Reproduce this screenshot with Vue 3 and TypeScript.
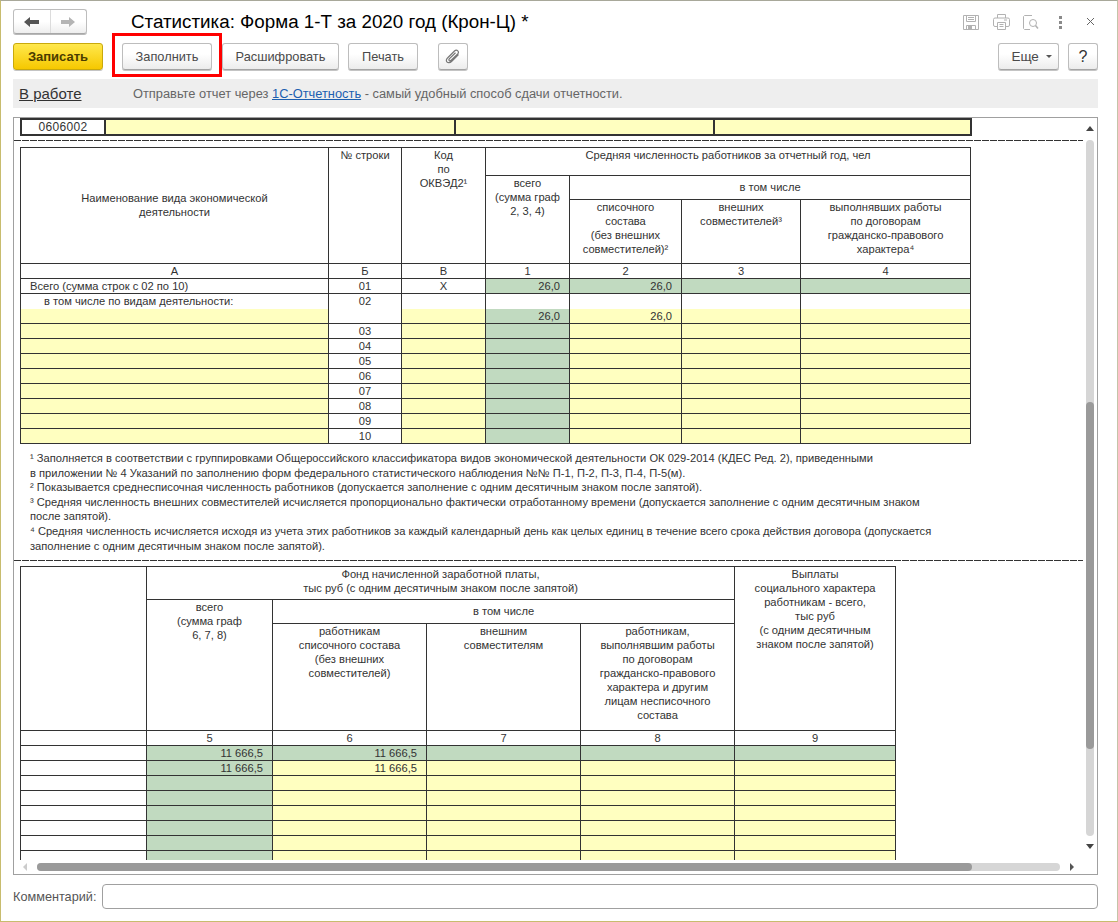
<script setup lang="ts">
const rows1: string[] = ['03', '04', '05', '06', '07', '08', '09', '10']
const rows2: number[] = [1, 2, 3, 4, 5, 6]
const notes: string[] = [
  '¹ Заполняется в соответствии с группировками Общероссийского классификатора видов экономической деятельности ОК 029-2014 (КДЕС Ред. 2), приведенными',
  'в приложении № 4 Указаний по заполнению форм федерального статистического наблюдения №№ П-1, П-2, П-3, П-4, П-5(м).',
  '² Показывается среднесписочная численность работников (допускается заполнение с одним десятичным знаком после запятой).',
  '³ Средняя численность внешних совместителей исчисляется пропорционально фактически отработанному времени (допускается заполнение с одним десятичным знаком',
  'после запятой).',
  '⁴ Средняя численность исчисляется исходя из учета этих работников за каждый календарный день как целых единиц в течение всего срока действия договора (допускается',
  'заполнение с одним десятичным знаком после запятой).'
]
</script>

<template>
  <div class="win">
    <header class="head">
      <div class="nav">
        <button class="nav-btn">
          <svg width="16" height="12" viewBox="0 0 16 12"><path d="M0 6 L6 1 V4 H15 V8 H6 V11 Z" fill="#555" /></svg>
        </button>
        <button class="nav-btn">
          <svg width="16" height="12" viewBox="0 0 16 12"><path d="M15 6 L9 1 V4 H1 V8 H9 V11 Z" fill="#b4b4b4" /></svg>
        </button>
      </div>
      <h1 class="title">Статистика: Форма 1-Т за 2020 год (Крон-Ц) *</h1>
      <div class="tools">
        <svg class="t-save" width="16" height="15" viewBox="0 0 16 15" fill="none" stroke="#b2b2b2">
          <path d="M.5.5H15.5V14.5H.5Z" />
          <path d="M3.5.5V6.5H12.5V.5M5 2.5H11M5 4.5H11" />
          <path d="M3.5 14.5V10.5H12.5V14.5" />
          <rect x="5" y="11" width="4" height="3" fill="#b2b2b2" stroke="none" />
        </svg>
        <svg class="t-print" width="17" height="16" viewBox="0 0 17 16" fill="none" stroke="#b2b2b2">
          <path d="M4.5 4V.5H12.5V4" />
          <path d="M4 12.5H2A1.5 1.5 0 0 1 .5 11V5.5A1.5 1.5 0 0 1 2 4H15A1.5 1.5 0 0 1 16.5 5.500V11A1.500 1.500 0 0 1 15 12.500H13" />
          <path d="M4.500 8.500H12.500V15.500H4.500ZM6.500 10.500H10.500M6.500 12.500H10.500M11 6H14" />
        </svg>
        <svg class="t-prev" width="16" height="15" viewBox="0 0 16 15" fill="none">
          <path d="M9 .5H1.500L.5 1.500V13.500L1.500 14.500H7" stroke="#b2b2b2" />
          <circle cx="10" cy="8" r="3.500" stroke="#b2b2b2" />
          <path d="M12.500 10.500L15 13.500" stroke="#b2b2b2" stroke-width="1.500" />
        </svg>
        <div class="kebab"><i></i><i></i><i></i></div>
        <svg class="t-close" width="9" height="9" viewBox="0 0 9 9"><path d="M1 1L8 8M8 1L1 8" stroke="#666" fill="none" /></svg>
      </div>
    </header>

    <div class="toolbar">
      <button class="btn primary">Записать</button>
      <div class="marked">
        <button class="btn fill">Заполнить</button>
        <span class="redbox"></span>
      </div>
      <button class="btn dec">Расшифровать</button>
      <button class="btn print">Печать</button>
      <button class="btn clip">
        <svg width="16" height="16" viewBox="0 0 16 16" fill="none" stroke="#777" stroke-width="1.200">
          <path d="M13.500 5.500L6.500 12.500C5 14 2.800 14 2 13C1 12 1.200 10.200 2.500 9L9.500 2C10.500 1 12 1 12.800 1.800C13.800 2.800 13.500 4 12.700 4.900L6.200 11.300C5.500 12 4.600 12 4.200 11.600C3.700 11 3.900 10.300 4.500 9.700L10.500 3.800" />
        </svg>
      </button>
      <button class="btn more">Еще <span class="caret"></span></button>
      <button class="btn help">?</button>
    </div>

    <div class="status">
      <a class="state">В работе</a>
      <span class="hint">Отправьте отчет через <a class="link">1С-Отчетность</a> - самый удобный способ сдачи отчетности.</span>
    </div>

    <section class="frame">
      <div class="view">
        <table class="code">
          <colgroup><col class="c0" /><col class="c1" /><col class="c2" /><col class="c3" /></colgroup>
          <tbody>
            <tr><td class="code-no">0606002</td><td class="y"></td><td class="y"></td><td class="y"></td></tr>
          </tbody>
        </table>
        <div class="dash d1"></div>

        <table class="grid t1">
          <colgroup>
            <col style="width:308px" /><col style="width:73px" /><col style="width:84px" /><col style="width:84px" />
            <col style="width:112px" /><col style="width:119px" /><col style="width:170px" />
          </colgroup>
          <tbody>
            <tr class="r28">
              <td rowspan="3" class="mid">Наименование вида экономической<br />деятельности</td>
              <td rowspan="3" class="top">№ строки</td>
              <td rowspan="3" class="top">Код<br />по<br />ОКВЭД2¹</td>
              <td colspan="4" class="top">Средняя численность работников за отчетный год, чел</td>
            </tr>
            <tr class="r24">
              <td rowspan="2" class="top">всего<br />(сумма граф<br />2, 3, 4)</td>
              <td colspan="3" class="mid">в том числе</td>
            </tr>
            <tr class="r64">
              <td class="top">списочного<br />состава<br />(без внешних<br />совместителей)²</td>
              <td class="top">внешних<br />совместителей³</td>
              <td class="top">выполнявших работы<br />по договорам<br />гражданско-правового<br />характера⁴</td>
            </tr>
            <tr><td>А</td><td>Б</td><td>В</td><td>1</td><td>2</td><td>3</td><td>4</td></tr>
            <tr>
              <td class="l1">Всего (сумма строк с 02 по 10)</td><td>01</td><td>Х</td>
              <td class="g num">26,0</td><td class="g num">26,0</td><td class="g"></td><td class="g"></td>
            </tr>
            <tr>
              <td class="l2 nb">в том числе по видам деятельности:</td>
              <td rowspan="2" class="top02">02</td>
              <td class="nb"></td><td class="nb"></td><td class="nb"></td><td class="nb"></td><td class="nb"></td>
            </tr>
            <tr>
              <td class="y nt"></td><td class="y nt"></td><td class="g num nt">26,0</td><td class="y num nt">26,0</td><td class="y nt"></td><td class="y nt"></td>
            </tr>
            <tr v-for="n in rows1" :key="n">
              <td class="y"></td><td>{{ n }}</td><td class="y"></td><td class="g"></td><td class="y"></td><td class="y"></td><td class="y"></td>
            </tr>
          </tbody>
        </table>

        <div class="notes">
          <p v-for="line in notes" :key="line">{{ line }}</p>
        </div>
        <div class="dash d2"></div>

        <table class="grid t2">
          <colgroup>
            <col style="width:126px" /><col style="width:126px" /><col style="width:154px" />
            <col style="width:154px" /><col style="width:154px" /><col style="width:161px" />
          </colgroup>
          <tbody>
            <tr class="r33">
              <td rowspan="3"></td>
              <td colspan="4" class="top">Фонд начисленной заработной платы,<br />тыс руб (с одним десятичным знаком после запятой)</td>
              <td rowspan="3" class="top">Выплаты<br />социального характера<br />работникам - всего,<br />тыс руб<br />(с одним десятичным<br />знаком после запятой)</td>
            </tr>
            <tr class="r24">
              <td rowspan="2" class="top">всего<br />(сумма граф<br />6, 7, 8)</td>
              <td colspan="3" class="mid">в том числе</td>
            </tr>
            <tr class="r107">
              <td class="top">работникам<br />списочного состава<br />(без внешних<br />совместителей)</td>
              <td class="top">внешним<br />совместителям</td>
              <td class="top">работникам,<br />выполнявшим работы<br />по договорам<br />гражданско-правового<br />характера и другим<br />лицам несписочного<br />состава</td>
            </tr>
            <tr><td></td><td>5</td><td>6</td><td>7</td><td>8</td><td>9</td></tr>
            <tr>
              <td></td><td class="g num">11 666,5</td><td class="g num">11 666,5</td><td class="g"></td><td class="g"></td><td class="g"></td>
            </tr>
            <tr>
              <td></td><td class="g num">11 666,5</td><td class="y num">11 666,5</td><td class="y"></td><td class="y"></td><td class="y"></td>
            </tr>
            <tr v-for="n in rows2" :key="n">
              <td></td><td class="g"></td><td class="y"></td><td class="y"></td><td class="y"></td><td class="y"></td>
            </tr>
          </tbody>
        </table>
      </div>

      <div class="vbar">
        <span class="arr up"></span>
        <div class="vtrack"><div class="vthumb"></div></div>
        <span class="arr down"></span>
      </div>
      <div class="hbar">
        <span class="arr left"></span>
        <div class="htrack"><div class="hthumb"></div></div>
        <span class="arr right"></span>
      </div>
    </section>

    <div class="comment">
      <label class="c-label">Комментарий:</label>
      <input class="c-input" type="text" />
    </div>
  </div>
</template>

<style>
html, body { margin: 0; padding: 0; background: #fff; }
</style>

<style scoped>
* { box-sizing: border-box; }
.win {
  width: 1118px;
  height: 922px;
  display: flex;
  flex-direction: column;
  padding: 0 19px 0 12px;
  background: #fff;
  border: 1px solid #c8bc6e;
  border-top-color: #a8a89a;
  border-right-color: #c4c4a8;
  font-family: "Liberation Sans", Arial, sans-serif;
  color: #333;
  overflow: hidden;
}
button { font-family: inherit; margin: 0; padding: 0; }

.head { display: flex; align-items: flex-start; height: 42px; padding-top: 8px; }
.nav {
  display: flex;
  width: 74px;
  height: 25px;
  border: 1px solid #bdbdbd;
  border-bottom-color: #a8a8a8;
  border-radius: 3px;
  background: linear-gradient(#fff 50%, #eeeeee);
  box-shadow: 0 1px 0 #b8b8b8;
}
.nav-btn {
  flex: 1;
  border: 0;
  background: none;
  display: flex;
  align-items: center;
  justify-content: center;
}
.nav-btn + .nav-btn { border-left: 1px solid #dcdcdc; }
.title {
  margin: 2px 0 0 44px;
  font-size: 18.8px;
  line-height: 21px;
  font-weight: 400;
  color: #000;
  white-space: nowrap;
}
.tools { margin-left: auto; display: flex; align-items: flex-start; position: relative; height: 30px; margin-right: -2px; }
.t-save { margin-top: 6px; }
.t-print { margin: 5px 0 0 14px; }
.t-prev { margin: 6px 0 0 13px; }
.kebab { margin: 7px 0 0 20px; width: 3px; display: flex; flex-direction: column; gap: 2px; }
.kebab i { display: block; width: 3px; height: 3px; background: #8a8a8a; }
.t-close { margin: 8px 5px 0 24px; }

.toolbar { display: flex; height: 36px; align-items: flex-start; }
.btn {
  height: 27px;
  border: 1px solid #bdbdbd;
  border-bottom-color: #a4a4a4;
  border-radius: 3px;
  background: linear-gradient(#fff 40%, #ececec);
  box-shadow: 0 1px 0 #c4c4c4;
  color: #4a4a4a;
  font-size: 12.8px;
  line-height: 24px;
  text-align: center;
}
.primary {
  width: 90px;
  background: linear-gradient(#ffe84d, #f6c800);
  border-color: #c9a90c;
  color: #4a3c00;
  font-size: 13px;
  font-weight: 700;
}
.marked { position: relative; margin-left: 19px; }
.fill { display: block; width: 90px; }
.redbox {
  position: absolute;
  left: -10px;
  right: -10px;
  top: -10px;
  bottom: -7px;
  border: 3px solid #f00;
  pointer-events: none;
}
.dec { width: 117px; margin-left: 10px; }
.print { width: 70px; margin-left: 9px; }
.clip { width: 30px; margin-left: 20px; display: flex; align-items: center; justify-content: center; }
.more { width: 61px; margin-left: auto; font-size: 13.5px; padding-left: 6px; }
.caret { display: inline-block; vertical-align: middle; margin-left: 3px; border: 3px solid transparent; border-top: 3px solid #555; border-bottom: 0; }
.help { width: 30px; margin-left: 9px; font-size: 16px; color: #333; }

.status {
  height: 29px;
  flex: none;
  background: #eeeeee;
  display: flex;
  align-items: center;
  padding-left: 6px;
  margin-bottom: 9px;
}
.state { width: 114px; font-size: 15px; color: #333; text-decoration: underline; }
.hint { font-size: 12.85px; color: #666; }
.link { color: #1c5fb0; text-decoration: underline; }

.frame {
  height: 758px;
  flex: none;
  border: 1px solid #a0a0a0;
  display: grid;
  grid-template-columns: 1071px 1fr;
  grid-template-rows: 742px 1fr;
}
.view { overflow: hidden; padding: 0 0 0 6px; position: relative; }

.code, .grid {
  border-collapse: collapse;
  table-layout: fixed;
  font-size: 11.15px;
  line-height: 14px;
  color: #333;
}
.code { width: 951px; height: 16px; }
.code td { border: 2px solid #333; height: 16px; padding: 0; text-align: center; font-size: 12px; line-height: 13px; letter-spacing: .3px; }
.c0 { width: 84px; }
.c1 { width: 350px; }
.c2 { width: 259px; }
.c3 { width: 257px; }
.code-no { background: #fff; }

.dash {
  height: 1px;
  width: 1069px;
  margin-left: -6px;
  background: repeating-linear-gradient(90deg, #333 0 7px, transparent 7px 8px);
}
.d1 { margin-top: 4px; margin-bottom: 6px; }
.d2 { margin-top: 7px; margin-bottom: 5px; }

.t1 { width: 951px; }
.t2 { width: 876px; }
.grid td {
  border: 1px solid #333;
  padding: 0;
  height: 15px;
  text-align: center;
  vertical-align: middle;
  white-space: nowrap;
  overflow: hidden;
}
.grid tr.r28 td { height: 28px; }
.grid tr.r24 td { height: 24px; }
.grid tr.r64 td { height: 64px; }
.grid tr.r33 td { height: 33px; }
.grid tr.r107 td { height: 107px; }
.grid td.top { vertical-align: top; }
.grid td.mid { vertical-align: middle; padding-bottom: 2px; }
.grid td.top02 { vertical-align: top; }
.grid td.y { background: #ffffc0; }
.grid td.g { background: #c1dac0; }
.grid td.num { text-align: right; padding-right: 9px; }
.grid td.l1 { text-align: left; padding-left: 9px; }
.grid td.l2 { text-align: left; padding-left: 23px; }
.grid td.nb { border-bottom: 0; }
.grid td.nt { border-top: 0; }
.code td.y { background: #ffffc0; }

.notes { margin: 7px 0 0 10px; font-size: 11.15px; color: #333; }
.notes p { margin: 0; line-height: 14.6px; white-space: nowrap; }

.vbar {
  grid-row: 1 / 3;
  grid-column: 2;
  display: flex;
  flex-direction: column;
  align-items: center;
  padding: 8px 3px 0 1px;
  height: 742px;
}
.vtrack { width: 8px; height: 696px; margin-top: 9px; padding-top: 262px; background: #d6d6d6; border-radius: 4px; flex: none; }
.vthumb { height: 347px; background: #9a9a9a; border-radius: 4px; }
.hbar {
  grid-row: 2;
  grid-column: 1;
  display: flex;
  align-items: center;
  padding-left: 9px;
  height: 14px;
}
.htrack { width: 1023px; height: 8px; margin-left: 10px; background: #d6d6d6; border-radius: 4px; flex: none; }
.hthumb { width: 935px; height: 8px; background: #9a9a9a; border-radius: 4px; }
.arr { display: block; width: 0; height: 0; flex: none; }
.up { border: 4px solid transparent; border-top: 0; border-bottom: 5px solid #444; }
.down { margin-top: 8px; border: 4px solid transparent; border-bottom: 0; border-top: 5px solid #444; }
.left { border: 4px solid transparent; border-left: 0; border-right: 4px solid #ccc; }
.right { margin-left: 10px; border: 4px solid transparent; border-right: 0; border-left: 4px solid #555; }

.comment { display: flex; align-items: center; height: 25px; margin-top: 9px; }
.c-label { width: 89px; font-size: 12.7px; color: #555; }
.c-input { flex: 1; height: 25px; border: 1px solid #a0a0a0; border-radius: 4px; background: #fff; outline: none; }
</style>
